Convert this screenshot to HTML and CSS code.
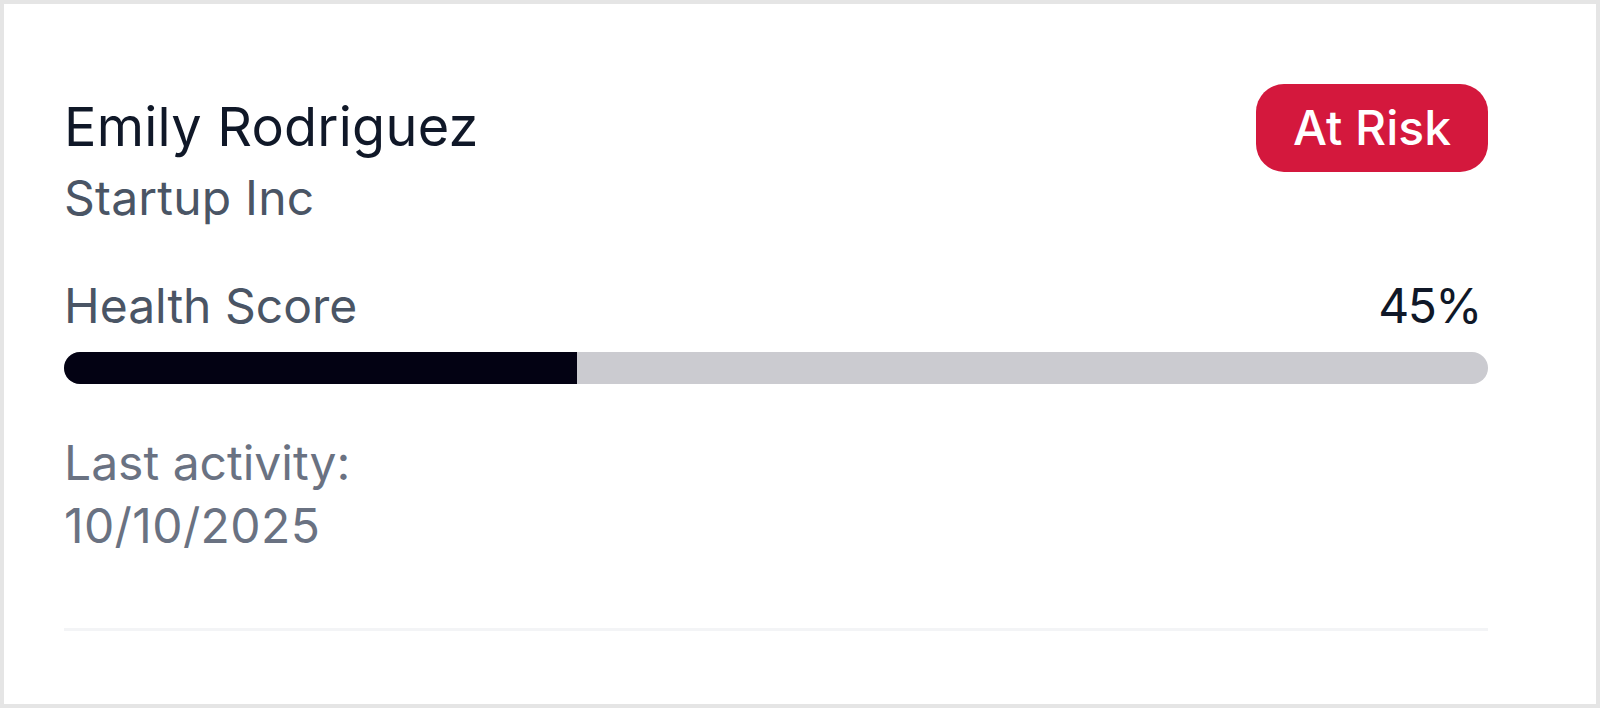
FILE: index.html
```html
<!DOCTYPE html>
<html lang="en">
<head>
<meta charset="utf-8">
<title>Customer Health</title>
<link rel="stylesheet" href="styles.css">
</head>
<body>
<div class="card">
  <div class="card-header">
    <div class="identity">
      <h2 class="name">Emily Rodriguez</h2>
      <p class="company">Startup Inc</p>
    </div>
    <span class="badge">At Risk</span>
  </div>
  <div class="health">
    <div class="health-row">
      <span class="health-label">Health Score</span>
      <span class="health-value">45%</span>
    </div>
    <div class="track"><div class="fill" style="width: 36%"></div></div>
  </div>
  <p class="activity">Last activity:<br><span class="date">10/10/2025</span></p>
  <div class="divider"></div>
</div>
</body>
</html>
```
FILE: styles.css
```css
* { box-sizing: border-box; }
html, body { margin: 0; padding: 0; background: #ffffff; }
body { font-family: Inter, "Noto Sans", sans-serif; }

.card {
  width: 1600px;
  height: 708px;
  border: 4px solid #e5e5e5;
  background: #ffffff;
  padding: 80px 108px 0 60px;
  display: flex;
  flex-direction: column;
}

.card-header {
  display: flex;
  justify-content: space-between;
  align-items: flex-start;
}

.name {
  margin: 0;
  font-size: 54px;
  line-height: 86px;
  font-weight: 400;
  letter-spacing: 0.25px;
  color: #101828;
}

.company {
  margin: 0;
  font-size: 48px;
  line-height: 56px;
  letter-spacing: 0.2px;
  color: #4a5565;
}

.badge {
  display: inline-flex;
  align-items: center;
  height: 88px;
  padding: 0 37px;
  border-radius: 28px;
  background: #d4183d;
  color: #ffffff;
  font-size: 48px;
  font-weight: 500;
  line-height: 1;
}

.health {
  margin-top: 51px;
  display: flex;
  flex-direction: column;
  gap: 17px;
}

.health-row {
  display: flex;
  justify-content: space-between;
  align-items: baseline;
  font-size: 48px;
  line-height: 58px;
}

.health-label { color: #4a5565; }
.health-value {
  color: #101828;
  letter-spacing: -1.5px;
  padding-right: 7px;
}

.track {
  height: 32px;
  border-radius: 16px;
  background: #cbcbd0;
  overflow: hidden;
}

.fill {
  height: 100%;
  background: #030213;
}

.activity {
  margin: 47px 0 0;
  font-size: 48px;
  line-height: 63px;
  color: #6a7282;
}

.date { letter-spacing: 0.4px; }

.divider {
  margin-top: 71px;
  height: 3px;
  background: #f3f4f6;
}
```
